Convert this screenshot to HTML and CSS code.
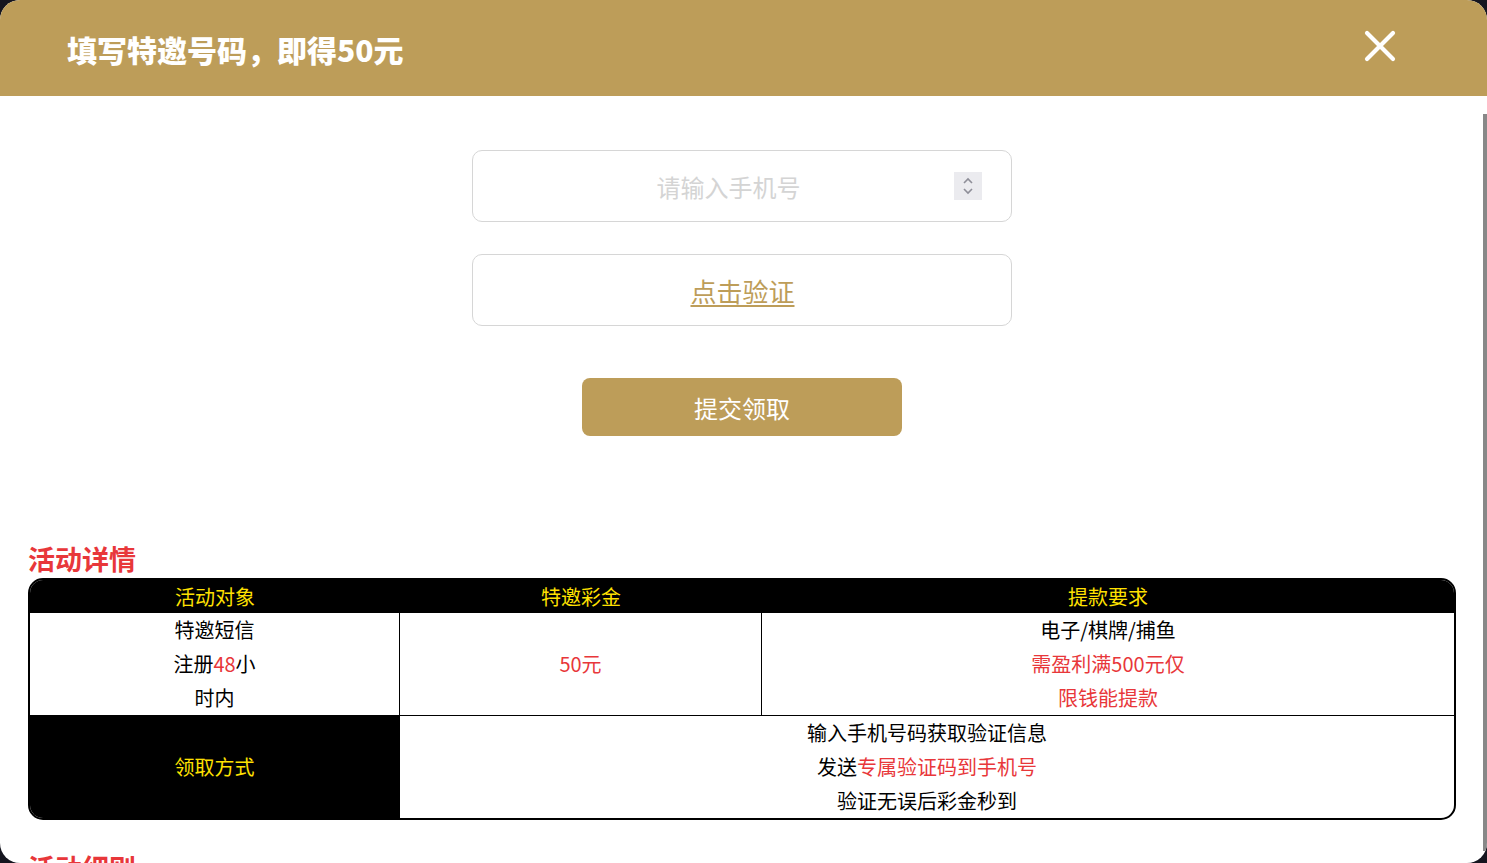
FILE: index.html
```html
<!DOCTYPE html>
<html lang="zh-CN">
<head>
    <meta charset="UTF-8">
    <meta name="viewport" content="width=device-width, initial-scale=1.0">
    <title>填写特邀号码</title>
    <link rel="stylesheet" href="styles.css">
</head>
<body>

<div class="modal">
    <div class="modal-header">
        <h1>填写特邀号码，即得50元</h1>
        <button class="close-button" aria-label="关闭">
            <svg width="34" height="34" viewBox="0 0 34 34">
                <path d="M4 4 L30 30 M30 4 L4 30" stroke="#fff" stroke-width="4.2" stroke-linecap="round" fill="none"/>
            </svg>
        </button>
    </div>

    <div class="modal-body">
        <form class="claim-form" onsubmit="return false;">
            <div class="field">
                <input type="text" class="phone-input" placeholder="请输入手机号">
                <span class="spinner">
                    <svg width="28" height="28" viewBox="0 0 28 28">
                        <path d="M10 11 L14 7 L18 11 M10 17 L14 21 L18 17" stroke="#8e8e98" stroke-width="1.6" fill="none"/>
                    </svg>
                </span>
            </div>
            <div class="field">
                <a href="#" class="verify-link">点击验证</a>
            </div>
            <button class="submit-button">提交领取</button>
        </form>

        <h2 class="section-title">活动详情</h2>
        <table class="detail-table">
            <thead>
                <tr>
                    <th class="col-target">活动对象</th>
                    <th class="col-bonus">特邀彩金</th>
                    <th>提款要求</th>
                </tr>
            </thead>
            <tbody>
                <tr>
                    <td>特邀短信<br>注册<span class="red">48</span>小<br>时内</td>
                    <td class="red">50元</td>
                    <td>电子/棋牌/捕鱼<br><span class="red">需盈利满500元仅<br>限钱能提款</span></td>
                </tr>
                <tr>
                    <td class="dark-cell">领取方式</td>
                    <td colspan="2">输入手机号码获取验证信息<br>发送<span class="red">专属验证码到手机号</span><br>验证无误后彩金秒到</td>
                </tr>
            </tbody>
        </table>

        <h2 class="section-title rules-title">活动细则</h2>
        <ol class="rules">
            <li>每个手机号码仅限领取一次特邀彩金。</li>
            <li>彩金需在注册48小时内完成领取，逾期视为自动放弃。</li>
            <li>本活动最终解释权归平台所有。</li>
        </ol>
    </div>

    <!-- 滚动条指示 -->
    <div class="scroll-thumb"></div>
</div>

</body>
</html>
```

FILE: styles.css
```css
* {
    box-sizing: border-box;
}
html, body {
    height: 100%;
}
body {
    margin: 0;
    background-color: #15151f;
    font-family: "Noto Sans CJK SC", "Noto Sans", sans-serif;
    overflow: hidden;
}
.modal {
    position: relative;
    height: 100vh;
    background-color: #fff;
    border-radius: 20px;
    overflow: hidden;
    display: flex;
    flex-direction: column;
}
.modal-header {
    flex: 0 0 96px;
    background-color: #bd9d59;
    display: flex;
    align-items: center;
    justify-content: space-between;
    padding: 0 90px 0 67px;
}
.modal-header h1 {
    margin: 0;
    margin-top: 2px;
    color: #fff;
    font-size: 30px;
    font-weight: 900;
}
.close-button {
    background: none;
    border: none;
    padding: 0;
    margin-top: -4px;
    cursor: pointer;
    display: flex;
}
.modal-body {
    flex: 1;
    overflow-y: auto;
    scrollbar-width: none;
    padding: 54px 31px 40px 28px;
}
.modal-body::-webkit-scrollbar {
    display: none;
}
.scroll-thumb {
    position: absolute;
    right: 0;
    top: 114px;
    bottom: 12px;
    width: 4px;
    background-color: #888;
}
.claim-form {
    display: flex;
    flex-direction: column;
    align-items: center;
    gap: 32px;
}
.field {
    width: 540px;
    height: 72px;
    border: 1px solid #d6d6d6;
    border-radius: 10px;
    display: flex;
    align-items: center;
    justify-content: center;
    padding: 0 29px 0 30px;
}
.phone-input {
    flex: 1;
    min-width: 0;
    border: none;
    outline: none;
    text-align: center;
    font-family: inherit;
    font-size: 24px;
    color: #333;
    background: transparent;
}
.phone-input::placeholder {
    color: #d4d4d4;
}
.spinner {
    width: 28px;
    height: 28px;
    background-color: #ebebef;
    display: flex;
}
.verify-link {
    color: #bd9d59;
    font-size: 26px;
    text-decoration: underline;
    text-underline-offset: 3px;
    text-decoration-thickness: 2px;
}
.submit-button {
    margin-top: 20px;
    width: 320px;
    height: 58px;
    border: none;
    border-radius: 8px;
    background-color: #bd9d59;
    color: #fff;
    font-family: inherit;
    font-size: 24px;
    cursor: pointer;
}
.section-title {
    margin: 104px 0 0;
    color: #e8373a;
    font-size: 27px;
    font-weight: bold;
    line-height: 38px;
}
.detail-table {
    width: 100%;
    border-collapse: separate;
    border-spacing: 0;
    border: 2px solid #000;
    border-radius: 15px;
    overflow: hidden;
    font-size: 20px;
    line-height: 34px;
    text-align: center;
}
.detail-table th {
    background-color: #000;
    color: #ffe100;
    font-weight: normal;
    height: 33px;
    line-height: 33px;
    padding: 0;
}
.detail-table td {
    padding: 0;
    border-right: 1px solid #000;
    border-bottom: 1px solid #000;
    color: #000;
}
.detail-table td:last-child {
    border-right: none;
}
.detail-table tr:last-child td {
    border-bottom: none;
}
.col-target {
    width: 370px;
}
.col-bonus {
    width: 362px;
}
.detail-table .dark-cell {
    background-color: #000;
    color: #ffe100;
}
.red {
    color: #e8373a;
}
.detail-table td.red {
    color: #e8373a;
}
.rules-title {
    margin-top: 29px;
}
.rules {
    margin: 10px 0 0;
    padding-left: 24px;
    font-size: 20px;
    line-height: 34px;
    color: #000;
}
```
